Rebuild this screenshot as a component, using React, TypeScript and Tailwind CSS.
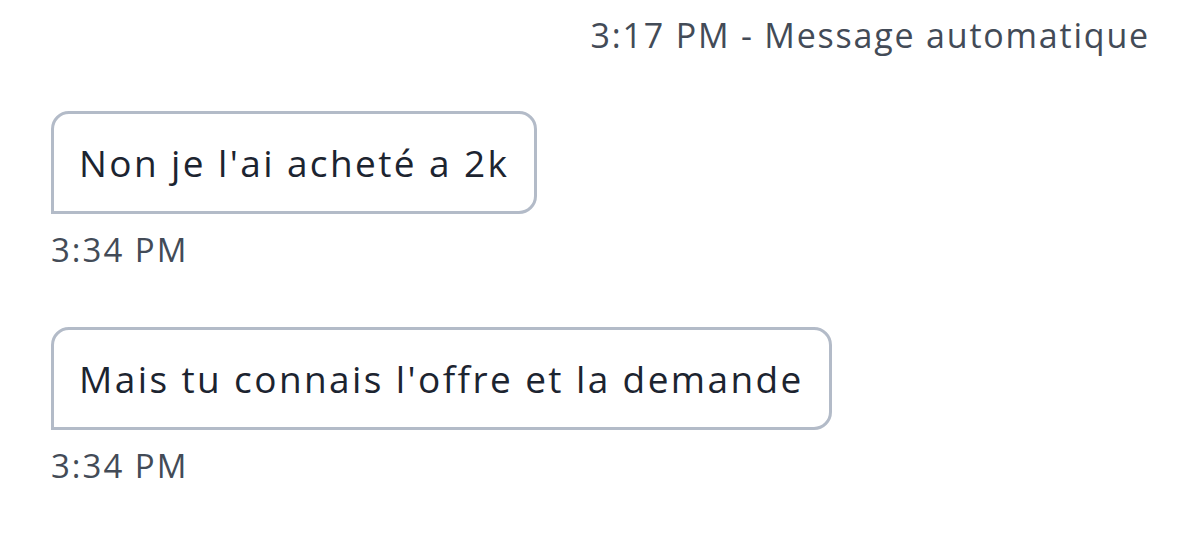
import React from "react";

export default function App() {
  return (
    <div className="w-[1200px] h-[535px] bg-white overflow-hidden" style={{ fontFamily: "'Open Sans', 'Noto Sans', sans-serif" }}>
      <div className="flex justify-end pr-[50px] pt-[13px] text-[34px] leading-[44px] text-[#434b57] tracking-[1.8px]">
        3:17 PM - Message automatique
      </div>
      <div className="pl-[51px] pt-[54px] flex flex-col items-start">
        <div className="border-[3px] border-[#b3bbc8] rounded-[18px] rounded-bl-none px-[25px] h-[103px] flex items-center text-[37px] text-[#1c2430] tracking-[2.4px]">
          Non je l'ai acheté a 2k
        </div>
        <div className="mt-[16px] text-[33px] leading-[40px] text-[#434b57] tracking-[2px]">3:34 PM</div>
        <div className="mt-[57px] border-[3px] border-[#b3bbc8] rounded-[18px] rounded-bl-none px-[25px] h-[103px] flex items-center text-[37px] text-[#1c2430] tracking-[2.4px]">
          Mais tu connais l'offre et la demande
        </div>
        <div className="mt-[16px] text-[33px] leading-[40px] text-[#434b57] tracking-[2px]">3:34 PM</div>
      </div>
    </div>
  );
}
